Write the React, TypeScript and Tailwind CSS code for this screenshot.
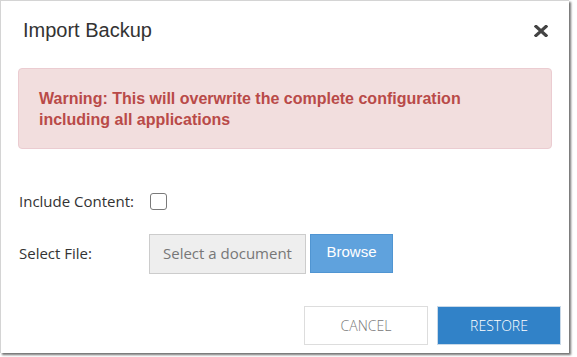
import React from "react"

const CloseIcon = () => (
  <svg width="14" height="12" viewBox="0 0 14 12" aria-hidden="true">
    <path d="M2 1.5 L12 10.5 M12 1.5 L2 10.5" stroke="#444" strokeWidth="3.2" strokeLinecap="square" />
  </svg>
)

export default function App() {
  return (
    <div className="h-[357px] w-[577px] overflow-hidden bg-white">
      <div className="flex h-[353px] w-[569px] flex-col border-l border-t border-[#d4d4d4] bg-white shadow-[2px_2px_2px_rgba(0,0,0,0.55)]">
        {/* header */}
        <div className="flex items-center justify-between pl-[22px] pr-[21px] pt-[15px]">
          <h4 className="font-['Liberation_Sans',Arial,sans-serif] text-[20px] leading-[28px] text-[#333]">
            Import Backup
          </h4>
          <button type="button" className="mt-[2px] flex h-[14px] w-[14px] items-center justify-center">
            <CloseIcon />
          </button>
        </div>

        {/* body */}
        <div className="px-[17px] pt-[24px]">
          <div className="rounded-[4px] border border-[#ebccd1] bg-[#f2dede] pb-[18px] pl-[20px] pr-[20px] pt-[19px] font-['Liberation_Sans',Arial,sans-serif] text-[16px] font-bold leading-[21px] text-[#b94a48]">
            Warning: This will overwrite the complete configuration
            <br />
            including all applications
          </div>

          <div className="mt-[41px] flex items-center font-['Open_Sans',sans-serif] text-[15px] text-[#333]">
            <label className="w-[132px] pl-[1px]">Include Content:</label>
            <span className="h-[17px] w-[17px] rounded-[3px] border-[1.5px] border-[#7a7a7a] bg-white" />
          </div>

          <div className="mt-[21px] flex items-center font-['Open_Sans',sans-serif] text-[15px] text-[#333]">
            <label className="w-[131px] pl-[1px]">Select File:</label>
            <div className="flex h-[40px] w-[157px] items-center border border-[#cccccc] bg-[#eeeeee] pl-[13px] text-[#777]">
              Select a document
            </div>
            <button
              type="button"
              className="ml-[4px] h-[39px] w-[83px] self-start border border-[#5095d2] bg-[#5fa2dd] font-['Liberation_Sans',Arial,sans-serif] text-[15px] text-white"
            >
              <span className="relative -top-[1px]">Browse</span>
            </button>
          </div>
        </div>

        {/* footer */}
        <div className="mt-[32px] flex justify-end gap-[9px] pr-[8px] font-['Open_Sans',sans-serif] text-[14px] font-light">
          <button type="button" className="h-[39px] w-[124px] border border-[#dddddd] bg-white text-[#777]">
            CANCEL
          </button>
          <button type="button" className="h-[39px] w-[124px] border border-[#c9d9e8] bg-[#3182c8] text-white">
            RESTORE
          </button>
        </div>
      </div>
    </div>
  )
}
